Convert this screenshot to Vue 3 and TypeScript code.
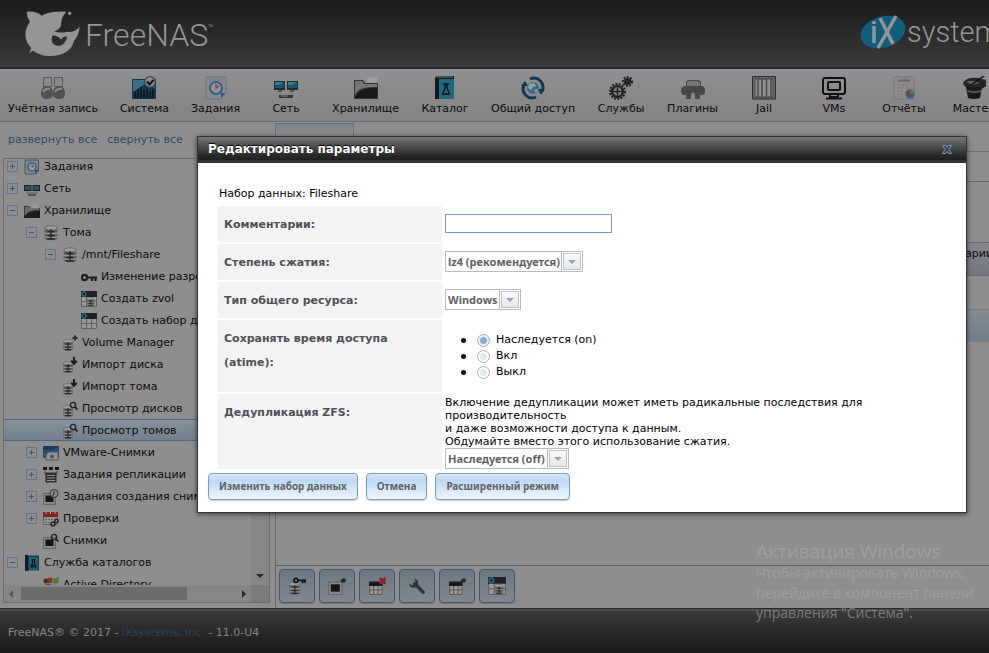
<script setup lang="ts">
import { ref } from 'vue'

interface TreeNode {
  label: string
  icon: string
  level: number
  state?: 'open' | 'closed'
  selected?: boolean
}

// Shared fragments drawn on a 16×16 canvas
const disks =
  '<path d="M2 3.500h12v10H2z" fill="#6e6e6e"/><path d="M1.500 5q6.500 2.500 13 0v2q-6.500 2.500-13 0zM1.500 9q6.500 2.500 13 0v2q-6.500 2.500-13 0zM1.500 12.500q6.500 2.500 13 0v1.500q-6.500 2.500-13 0z" fill="#5c5c5c"/><ellipse cx="8" cy="3" rx="6.300" ry="2.200" fill="#9c9c9c" stroke="#5a5a5a" stroke-width=".7"/><path d="M2 8.300h12M2 12.200h12" stroke="#a0a0a0"/><path d="M8 4v10M4.500 6.500h7M4.500 10.500h7M4 14h8" stroke="#262626" stroke-width="1.400"/>'
const smallDisks = `<g transform="translate(0 4) scale(.76)">${disks}</g>`
const grid =
  '<path d="M.5.5h15v15H.5z" fill="#999" stroke="#626262"/><path d="M0 0h16v6H0z" fill="#202020"/><path d="M5.500 6v10M10.500 6v10M0 10.500h16" stroke="#626262"/>'
const smallGrid =
  '<path d="M1 5h12v11H1z" fill="#999"/><path d="M1 4h12v4H1z" fill="#181818"/><path d="M1.500 8v7.500h11V8M5 8v8M9 8v8M1 11.500h12" stroke="#5c5c5c" fill="none"/>'
const ring = '<circle cx="3" cy="3" r="2" fill="none" stroke="#1c6d8a" stroke-width="1.500"/>'
const snapshot = '<path d="M.5 4.500h12v11H.500z" fill="#888" stroke="#666"/><path d="M2.500 6.500h8v6.500h-8z" fill="#151515"/>'
const lens = '<circle cx="11" cy="4" r="2.600" fill="none" stroke="#222" stroke-width="1.400"/><path d="M13 6l2.500 2.500" stroke="#222" stroke-width="1.800"/>'
const plus = '<path d="M13 .5v5M10.500 3h5" stroke="#303030" stroke-width="2"/>'
const downArrow = '<path d="M12 0v6M9.200 3.700l2.800 3 2.800-3" stroke="#1c1c1c" stroke-width="2" fill="none"/>'
const plug = '<path d="M11.500 4l2-1.500" stroke="#222" stroke-width="2"/><path d="M12 3h4M14 1v4" stroke="#2c2c2c" stroke-width="2"/>'

const treeIcons: Record<string, string> = {
  tasks:
    '<path d="M1 1h13.500v11l-3 3H1z" fill="#80868a" stroke="#4e5559"/><circle cx="8" cy="8" r="4" fill="#949da3" stroke="#3b6484" stroke-width="1.700"/><path d="M8 5.500V8l2-1" stroke="#803a30" fill="none"/><path d="M11 15l4-4h-4z" fill="#1a5880"/>',
  network:
    '<path d="M0 4h7.500v6H0zM8.500 4H16v6H8.500z" fill="#222"/><path d="M1 5h5.500v4H1zM9.500 5H15v4H9.500z" fill="#21576c"/><path d="M3 10v2h10v-2M8 12v2" stroke="#666" fill="none"/><path d="M4 13h8v2H4z" fill="#555"/>',
  folder:
    '<path d="M8 1l5-1 1 5H8z" fill="#999"/><path d="M0 3h5l2 2h9v10H0z" fill="#3b3b3b"/><path d="M1 13Q4 6 15 7V5H7L5 4H1z" fill="#6d6d6d"/><path d="M0 14Q4 7 16 8v7H0z" fill="#1c1c1c"/>',
  disks,
  key: '<circle cx="3.500" cy="8.500" r="2.600" fill="none" stroke="#1c1c1c" stroke-width="2.200"/><path d="M6 8.500h10M11 9v3M14.500 9v3" stroke="#1c1c1c" stroke-width="2.200"/>',
  zvol: `${grid}${ring}<g transform="translate(5 6) scale(.6)">${disks}</g>`,
  dataset: `${grid}${ring}`,
  diskAdd: smallDisks + plus,
  diskImport: smallDisks + downArrow,
  diskView: smallDisks + lens,
  vmware:
    '<path d="M0 1h16v12H0z" fill="#24506f"/><path d="M0 4q8 3 16-3H0z" fill="#1a3c58"/><path d="M3 9l3-2h9v8H3z" fill="#8e9498" stroke="#555"/><circle cx="9" cy="11.500" r="2" fill="#555"/>',
  replication:
    '<path d="M0 0h4v3H0zM6 0h4v3H6zM12 0h4v3h-4z" fill="#181818"/><path d="M2 4v3h2M14 4v3h-2" stroke="#444" fill="none"/><path d="M2.500 5.500h11v10h-11z" fill="#303030"/><path d="M4 8.500h8M4 11h8M4 13.500h8" stroke="#909090"/>',
  snapTask: `${snapshot}<circle cx="11" cy="4.500" r="4" fill="#8d8d8d" stroke="#333"/><path d="M11 2v3l-1.500 2" stroke="#222" fill="none"/>`,
  calendar:
    '<path d="M.5 1.500h14v12H.500z" fill="#929292" stroke="#666"/><path d="M0 1h15v5H0z" fill="#862222"/><path d="M3 0v3M7.500 0v3M12 0v3" stroke="#aaa"/><path d="M2 8.500h11M2 11.500h7" stroke="#666" stroke-dasharray="2 1"/><circle cx="10" cy="13" r="2" fill="none" stroke="#222" stroke-width="1.500"/><circle cx="13.500" cy="10" r="1.700" fill="none" stroke="#222" stroke-width="1.400"/>',
  snapView: snapshot + lens,
  directory:
    '<path d="M1 .5h14v15H1z" fill="#123e50"/><path d="M1 0h3v16H1z" fill="#101c22"/><path d="M5 2h9v13H5z" fill="#1b6076"/><path d="M8 4.500h3M8.500 4.500V8l-1.500 4h5l-1.500-4V4.500M8 10.500h4" stroke="#081216" stroke-width="1.200" fill="none"/>',
  windows:
    '<circle cx="3" cy="4" r="2.500" fill="#3b2a22"/><path d="M5 1q3-1 5 0l-1 5H4z" fill="#8c3424"/><path d="M11 1q2 1 5-1l-1 6q-3 1-5 0z" fill="#4a7a2b"/><path d="M3 7q3-1 5 0l-1 6q-3-1-5 0z" fill="#2c5583"/><path d="M9 7q3 1 5 0l-1 6q-3 1-5 0z" fill="#94802c"/>',
}

const tree: TreeNode[] = [
  { label: 'Задания', icon: 'tasks', level: 0, state: 'closed' },
  { label: 'Сеть', icon: 'network', level: 0, state: 'closed' },
  { label: 'Хранилище', icon: 'folder', level: 0, state: 'open' },
  { label: 'Тома', icon: 'disks', level: 1, state: 'open' },
  { label: '/mnt/Fileshare', icon: 'disks', level: 2, state: 'open' },
  { label: 'Изменение разрешений', icon: 'key', level: 3 },
  { label: 'Создать zvol', icon: 'zvol', level: 3 },
  { label: 'Создать набор данных', icon: 'dataset', level: 3 },
  { label: 'Volume Manager', icon: 'diskAdd', level: 2 },
  { label: 'Импорт диска', icon: 'diskImport', level: 2 },
  { label: 'Импорт тома', icon: 'diskImport', level: 2 },
  { label: 'Просмотр дисков', icon: 'diskView', level: 2 },
  { label: 'Просмотр томов', icon: 'diskView', level: 2, selected: true },
  { label: 'VMware-Снимки', icon: 'vmware', level: 1, state: 'closed' },
  { label: 'Задания репликации', icon: 'replication', level: 1, state: 'closed' },
  { label: 'Задания создания снимков', icon: 'snapTask', level: 1, state: 'closed' },
  { label: 'Проверки', icon: 'calendar', level: 1, state: 'closed' },
  { label: 'Снимки', icon: 'snapView', level: 1 },
  { label: 'Служба каталогов', icon: 'directory', level: 0, state: 'open' },
  { label: 'Active Directory', icon: 'windows', level: 1 },
]

const gear = (cx: number, cy: number, r: number): string =>
  `<circle cx="${cx}" cy="${cy}" r="${r}" fill="none" stroke="#222" stroke-width="2" stroke-dasharray="2 1.300"/><circle cx="${cx}" cy="${cy}" r="${r - 2}" fill="#777" stroke="#222" stroke-width="2.200"/><path d="M${cx - r + 2} ${cy}h${2 * r - 4}M${cx} ${cy - r + 2}v${2 * r - 4}" stroke="#222" stroke-width="1.200"/><circle cx="${cx}" cy="${cy}" r="1.500" fill="#222"/>`

// Main menu, icons drawn on a 24×24 canvas
const menu: { label: string; icon: string }[] = [
  {
    label: 'Учётная запись',
    icon: '<path d="M2 1h9v10H2zM13 1h9v10h-9z" fill="#5c5c5c"/><path d="M3 2h7v8H3zM14 2h7v8h-7z" fill="#8a8a8a"/><path d="M0 18q0-8 6-8t6 8q0 5-6 5t-6-5zM12 18q0-8 6-8t6 8q0 5-6 5t-6-5z" fill="#505050"/><path d="M2 16q2-4 7-3M14 16q2-4 7-3" stroke="#8c8c8c" stroke-width="2" fill="none"/>',
  },
  {
    label: 'Система',
    icon: '<path d="M0 3h24v20H0z" fill="#123a55"/><path d="M1 4h22v8L13 8 1 16z" fill="#3c6d89"/><path d="M3 22v-7M6 22v-9M9 22V11M12 22v-8M15 22v-9M18 22v-7M21 22v-9" stroke="#12181c" stroke-width="1.800"/><circle cx="18" cy="6" r="5.300" fill="#8f8f8f" stroke="#444" stroke-width="1.300"/><path d="M15 5.500l2.500 3L21.500 4" stroke="#111" stroke-width="2" fill="none"/>',
  },
  {
    label: 'Задания',
    icon: '<path d="M2 1h20v16l-5 6H2z" fill="#858b8e" stroke="#68777c"/><path d="M5 4h13M5 7h8M5 10h5M5 18h8" stroke="#73797c"/><circle cx="12" cy="12" r="6" fill="#8e9396" stroke="#345c84" stroke-width="2"/><path d="M12 8v4l3-2" stroke="#8b3a30" stroke-width="1.300" fill="none"/><path d="M17 22l4-5h-4z" fill="#1a5880"/>',
  },
  {
    label: 'Сеть',
    icon: '<path d="M0 5h11v9H0zM13 5h11v9H13z" fill="#2a2a2a"/><path d="M1 6h9v6H1zM14 6h9v6h-9z" fill="#125873"/><path d="M1 6h8L5 9H1zM14 6h8l-4 3h-4z" fill="#347c96"/><path d="M4 14h4v2H4zM16 14h4v2h-4z" fill="#555"/><path d="M5 19h14v3H5z" fill="#333"/><path d="M7 20h7" stroke="#888"/>',
  },
  {
    label: 'Хранилище',
    icon: '<path d="M13 2l10-1v8H13z" fill="#9d9d9d"/><path d="M0 4h9l2 3h13v16H0z" fill="#343434"/><path d="M1 20Q3 10 23 11V8H10L8 5H1z" fill="#777"/><path d="M1 22Q4 11 23 12v10z" fill="#181818"/>',
  },
  {
    label: 'Каталог',
    icon: '<path d="M2 2l2-2h17v23H2z" fill="#0e1c22"/><path d="M6 3h15v20H6z" fill="#1e6880"/><path d="M4 1h16" stroke="#888"/><path d="M10 8h6M12 8v4l-2.500 6h7L14 12V8M9 18h8" stroke="#0a1215" stroke-width="1.300" fill="none"/>',
  },
  {
    label: 'Общий доступ',
    icon: '<path d="M9 3a9 9 0 0 1 12 12M15 21A9 9 0 0 1 3 9" stroke="#123850" stroke-width="3" fill="none"/><path d="M17 13h7l-4 6zM0 10h7L4 5z" fill="#123850"/><circle cx="12" cy="12" r="6" fill="#3c6a86"/><path d="M8 8l5-1 2 3-3 1-2 3-3-2zM13 14l4-1-2 4z" fill="#8ca4b0"/>',
  },
  { label: 'Службы', icon: gear(8.5, 15.5, 7.5) + gear(18.5, 5.5, 4.5) },
  {
    label: 'Плагины',
    icon: '<path d="M5 7q0-3 4-3h7q4 0 4 3v3h2q2 1 2 5t-3 4h-2v4h-5v-5q-2-3-4 0v5H5v-4H3q-3 0-3-4t3-5h2z" fill="#484848"/><path d="M6 8q0-3 3-3h7q3 0 3 3v2H6z" fill="#767676"/>',
  },
  {
    label: 'Jail',
    icon: '<path d="M.5.5h23v22.500H.5z" fill="#696969" stroke="#2b2b2b"/><path d="M3 3h18v18H3z" fill="#8f8f8f" stroke="#444"/><path d="M6 3v18M10 3v18M14.500 3v18M19 3v18" stroke="#484848" stroke-width="1.500"/>',
  },
  {
    label: 'VMs',
    icon: '<rect x="1" y="2" width="22" height="16" rx="2" fill="none" stroke="#111" stroke-width="2"/><rect x="6" y="6" width="12" height="8" rx="1" fill="none" stroke="#111" stroke-width="2"/><path d="M8 19v2h8v-2M4 22.500h16" stroke="#111" stroke-width="2" fill="none"/>',
  },
  {
    label: 'Отчёты',
    icon: '<path d="M2 1h20v22H2z" fill="#8c8c8c" stroke="#777"/><path d="M6 4.500h12" stroke="#666" stroke-width="2"/><path d="M5 9h14M5 12h14M5 15h6M5 18h6" stroke="#797979" stroke-dasharray="3 1"/><circle cx="18" cy="18" r="4.500" fill="#365d91"/><path d="M18 18v-4.500a4.500 4.500 0 0 0-4.500 4.500z" fill="#8b4020"/><path d="M18 18h4.500a4.500 4.500 0 0 0-4.500-4.500z" fill="#557e38"/>',
  },
  {
    label: 'Мастер',
    icon: '<path d="M1 7Q4 1 16 2l8 2v6q-4 4-14 3Q2 12 1 7z" fill="#242424"/><path d="M4 11h16l-2 11q-6 2-12 0z" fill="#191919"/><path d="M5 14q7 2 14 0v2q-7 2-13 0z" fill="#555"/><path d="M4 6q8-3 14 1L10 9z" fill="#606060"/><path d="M9 9L22 0" stroke="#111" stroke-width="1.500"/>',
  },
]

const tools: { name: string; icon: string }[] = [
  { name: 'Права', icon: `${smallDisks}<circle cx="7" cy="3" r="1.800" fill="none" stroke="#111" stroke-width="1.400"/><path d="M9 3h7M13 3v2.500M15 3v2" stroke="#111" stroke-width="1.600"/>` },
  { name: 'Создать снимок', icon: snapshot + plug },
  { name: 'Удалить', icon: `${smallGrid}<path d="M10.500 1l5 5M15.500 1l-5 5" stroke="#8f2025" stroke-width="2.800"/>` },
  {
    name: 'Изменить',
    icon: '<path d="M6 6l7.500 7.500" stroke="#303436" stroke-width="3" stroke-linecap="round"/><path d="M5.500 1.500A4 4 0 1 1 1 6l3 1.300L7 4.500z" fill="#303436"/>',
  },
  { name: 'Создать набор', icon: smallGrid + plug },
  { name: 'Создать zvol', icon: treeIcons.zvol },
]

const comment = ref('')
const compression = ref('lz4 (рекомендуется)')
const shareType = ref('Windows')
const atime = ref('inherit')
const dedup = ref('Наследуется (off)')
const atimeOptions = [
  { value: 'inherit', label: 'Наследуется (on)' },
  { value: 'on', label: 'Вкл' },
  { value: 'off', label: 'Выкл' },
]
</script>

<template>
  <div class="page">
    <header class="brand">
      <svg class="fish" viewBox="75 33 168 141" aria-hidden="true">
        <path
          fill-rule="evenodd"
          d="M80 38Q110 36 125 50Q150 36 199 38Q182 56 183 80Q178 92 162 97Q180 104 202 98Q222 102 239 84Q236 112 222 125Q212 170 148 171Q118 170 100 155L86 162Q92 155 94 148Q60 110 90 68Q80 52 80 38ZM157 110Q148 140 178 141Q196 136 202 114Q190 108 184 122Q172 108 157 110Z"
        />
        <circle cx="209" cy="43" r="5" />
      </svg>
      <span class="brand-name">FreeNAS<sup>™</sup></span>
      <div class="vendor">
        <svg viewBox="0 0 46 36" aria-hidden="true">
          <ellipse cx="23" cy="18" rx="23" ry="15.500" transform="rotate(-18 23 18)" fill="#105e7e" />
          <path d="M14 12v17M14 7v3" stroke="#959595" stroke-width="3.500" />
          <path d="M20 4L33 30M36 2L18 34" stroke="#959595" stroke-width="3.500" />
        </svg>
        <span>systems</span>
      </div>
    </header>

    <nav class="menu">
      <a v-for="item in menu" :key="item.label" href="#" class="menu-item">
        <svg viewBox="0 0 24 24" aria-hidden="true" v-html="item.icon"></svg>
        <span>{{ item.label }}</span>
      </a>
    </nav>

    <main class="workspace">
      <aside class="sidebar">
        <div class="tree-actions">
          <a href="#">развернуть все</a>
          <a href="#">свернуть все</a>
        </div>
        <div class="tree-box">
          <div class="tree-view">
            <ul class="tree">
              <li
                v-for="node in tree"
                :key="node.label"
                class="node"
                :class="[`level-${node.level}`, { selected: node.selected }]"
              >
                <span class="toggle" :class="node.state"></span>
                <svg viewBox="0 0 16 16" aria-hidden="true" v-html="treeIcons[node.icon]"></svg>
                <span>{{ node.label }}</span>
              </li>
            </ul>
          </div>
          <div class="vscroll"><i class="arrow down"></i></div>
          <div class="hscroll">
            <i class="arrow left"></i>
            <span class="track"><span class="thumb"></span></span>
            <i class="arrow right"></i>
          </div>
          <div class="corner"></div>
        </div>
      </aside>

      <section class="content">
        <div class="tabs"><div class="tab"></div></div>
        <div class="panel">
          <div class="subtabs"></div>
          <div class="spacer"></div>
          <div class="grid-head">Комментарии</div>
          <div class="grid-row"></div>
          <div class="grid-row active"></div>
        </div>
        <div class="toolbar">
          <button v-for="tool in tools" :key="tool.name" type="button" class="tool" :aria-label="tool.name">
            <svg viewBox="0 0 16 16" aria-hidden="true" v-html="tool.icon"></svg>
          </button>
        </div>
      </section>
    </main>

    <footer class="footer">FreeNAS® © 2017 - <a href="#">iXsystems, Inc.</a> - 11.0-U4</footer>

    <div class="dialog" role="dialog" aria-labelledby="dialog-title">
      <div class="dialog-title">
        <h1 id="dialog-title">Редактировать параметры</h1>
        <button type="button" class="close" aria-label="Закрыть">
          <svg viewBox="0 0 10 9" aria-hidden="true">
            <path d="M.5.5h3L5 2.500 6.500.5h3L7 4.500l2.500 4h-3L5 6.500l-1.500 2h-3L3 4.500z" fill="#344a5c" stroke="#8094a4" />
          </svg>
        </button>
      </div>
      <form class="dialog-body" @submit.prevent>
        <p class="dataset">Набор данных: Fileshare</p>
        <table class="fields">
          <tbody>
            <tr>
              <th scope="row"><label for="comment">Комментарии:</label></th>
              <td><input id="comment" v-model="comment" class="text" type="text" /></td>
            </tr>
            <tr>
              <th scope="row"><label for="compression">Степень сжатия:</label></th>
              <td>
                <span class="select">
                  <select id="compression" v-model="compression"><option>lz4 (рекомендуется)</option></select>
                  <i class="drop"></i>
                </span>
              </td>
            </tr>
            <tr>
              <th scope="row"><label for="share">Тип общего ресурса:</label></th>
              <td>
                <span class="select">
                  <select id="share" v-model="shareType"><option>Windows</option></select>
                  <i class="drop"></i>
                </span>
              </td>
            </tr>
            <tr>
              <th scope="row">Сохранять время доступа (atime):</th>
              <td>
                <ul class="radios">
                  <li v-for="option in atimeOptions" :key="option.value">
                    <label>
                      <input v-model="atime" type="radio" name="atime" :value="option.value" />
                      <span>{{ option.label }}</span>
                    </label>
                  </li>
                </ul>
              </td>
            </tr>
            <tr>
              <th scope="row"><label for="dedup">Дедупликация ZFS:</label></th>
              <td class="stacked">
                <p class="warning">
                  Включение дедупликации может иметь радикальные последствия для производительность<br />
                  и даже возможности доступа к данным.<br />
                  Обдумайте вместо этого использование сжатия.
                </p>
                <span class="select">
                  <select id="dedup" v-model="dedup"><option>Наследуется (off)</option></select>
                  <i class="drop"></i>
                </span>
              </td>
            </tr>
          </tbody>
        </table>
        <div class="actions">
          <button type="submit">Изменить набор данных</button>
          <button type="button">Отмена</button>
          <button type="button">Расширенный режим</button>
        </div>
      </form>
    </div>

    <div class="watermark">
      <strong>Активация Windows</strong>
      Чтобы активировать Windows, перейдите в компонент панели управления "Система".
    </div>
  </div>
</template>

<style>
body {
  background: #8e8e8e;
}
</style>

<style scoped>
* {
  box-sizing: border-box;
}
.page {
  position: relative;
  display: flex;
  flex-direction: column;
  height: 100vh;
  overflow: hidden;
  font-family: Verdana, 'DejaVu Sans', sans-serif;
  font-size: 11px;
  color: #0c0c0c;
  background: #8e8e8e;
}
a {
  color: inherit;
  text-decoration: none;
}
ul,
p,
h1 {
  margin: 0;
  padding: 0;
}
ul {
  list-style: none;
}

.brand {
  display: flex;
  flex: none;
  align-items: center;
  height: 69px;
  padding-left: 25px;
  background: linear-gradient(#1b1b1b, #3a3a3a);
  border-bottom: 2px solid #252528;
  color: #959595;
  font-family: Roboto, 'Open Sans', sans-serif;
  font-weight: 300;
}
.fish {
  width: 56px;
  height: 47px;
  fill: #959595;
}
.brand-name {
  flex: 1;
  padding: 2px 0 0 4px;
  font-size: 32px;
  line-height: 40px;
}
.brand-name sup {
  font-size: 9px;
  line-height: 0;
  vertical-align: 15px;
}
.vendor {
  display: flex;
  flex: none;
  align-items: center;
  gap: 1px;
  width: 129px;
  padding-bottom: 4px;
  font-size: 29px;
}
.vendor svg {
  flex: none;
  width: 46px;
  height: 36px;
}

.menu {
  display: flex;
  flex: none;
  gap: 22px;
  height: 53px;
  padding: 6px 8px 0;
  overflow: hidden;
  background: linear-gradient(#909090, #838383);
  border-top: 1px solid #8f90a0;
  border-bottom: 1px solid #6b6d7a;
}
.menu-item {
  display: flex;
  flex: none;
  flex-direction: column;
  align-items: center;
  min-width: 48px;
}
.menu-item svg {
  width: 24px;
  height: 24px;
}
.menu-item span {
  line-height: 18px;
}

.workspace {
  display: flex;
  flex: 1;
  min-height: 0;
}
.sidebar {
  display: flex;
  flex: none;
  flex-direction: column;
  width: 275px;
  padding: 0 5px 6px 3px;
}
.tree-actions {
  display: flex;
  gap: 10px;
  padding: 11px 5px 12px;
  line-height: 13px;
  color: #2f4a64;
}
.tree-box {
  display: grid;
  flex: 1;
  grid-template-rows: minmax(0, 1fr) 17px;
  grid-template-columns: minmax(0, 1fr) 18px;
  min-height: 0;
  border: 1px solid #6e6e6e;
}
.tree-view {
  display: flex;
  flex-direction: column;
  overflow: hidden;
}
.tree {
  margin-top: -4px;
}
.node {
  display: flex;
  align-items: center;
  height: 22px;
  white-space: nowrap;
  border: solid transparent;
  border-width: 1px 0;
}
.node.selected {
  border-color: #4c6880;
  background: linear-gradient(#87929c, #70808e);
}
.level-0 {
  padding-left: 3px;
}
.level-1 {
  padding-left: 22px;
}
.level-2 {
  padding-left: 41px;
}
.level-3 {
  padding-left: 60px;
}
.node svg {
  flex: none;
  width: 16px;
  height: 16px;
  margin: 2px 4px 0 6px;
}
.toggle {
  flex: none;
  width: 11px;
  height: 11px;
}
.toggle.open,
.toggle.closed {
  border: 1px solid #6c7484;
  background:
    linear-gradient(#3e5270, #3e5270) center / 5px 1px no-repeat,
    #8b8e92;
}
.toggle.closed {
  background:
    linear-gradient(#3e5270, #3e5270) center / 5px 1px no-repeat,
    linear-gradient(#3e5270, #3e5270) center / 1px 5px no-repeat,
    #8b8e92;
}
.vscroll,
.hscroll {
  display: flex;
  align-items: center;
  background: #868686;
}
.vscroll {
  flex-direction: column;
  justify-content: flex-end;
  padding-bottom: 7px;
}
.hscroll {
  padding: 0 5px;
}
.corner {
  background: #7b7b7b;
}
.track {
  flex: 1;
  height: 13px;
  margin: 0 8px;
}
.thumb {
  display: block;
  width: 78%;
  height: 100%;
  background: #6c6c6c;
}
.arrow {
  width: 0;
  height: 0;
  border: 4px solid transparent;
}
.arrow.down {
  border-top-color: #292929;
  border-bottom: 0;
}
.arrow.left {
  border-right-color: #555;
  border-left: 0;
}
.arrow.right {
  border-left-color: #292929;
  border-right: 0;
}

.content {
  display: flex;
  flex: 1;
  flex-direction: column;
  min-width: 0;
}
.tabs {
  display: flex;
  align-items: flex-end;
  height: 30px;
  border-bottom: 1px solid #6b6d7a;
}
.tab {
  width: 79px;
  height: 28px;
  border: 1px solid #6b717c;
  border-bottom: 0;
  background: linear-gradient(#76848f, #8e8e8e 8px);
}
.panel {
  flex: 1;
  margin-right: -4px;
  border-left: 1px solid #66686c;
  border-bottom: 1px solid #606060;
}
.subtabs {
  height: 30px;
  border-bottom: 1px solid #67676e;
}
.spacer {
  height: 60px;
}
.grid-head {
  height: 34px;
  border: solid #696969;
  border-width: 1px 0;
  line-height: 22px;
  text-align: right;
  background: linear-gradient(#84868c, #74767f);
}
.grid-row {
  height: 33px;
}
.grid-row.active {
  border: solid #85786a;
  border-width: 1px 0;
  background: linear-gradient(#858c92, #707f8c);
}
.toolbar {
  display: flex;
  gap: 4px;
  padding: 3px 3px 6px;
  border-left: 1px solid #66686c;
}
.tool {
  display: grid;
  place-items: center;
  width: 36px;
  height: 34px;
  padding: 0;
  border: 1px solid #42596e;
  border-radius: 4px;
  background: linear-gradient(#6a7885, #82878d);
  box-shadow: 0 1px 1px #747474;
}
.tool svg {
  width: 18px;
  height: 18px;
}

.footer {
  flex: none;
  height: 44px;
  padding-left: 8px;
  border-top: 2px solid #4c4c4c;
  outline: 1px solid #29292c;
  line-height: 44px;
  color: #858585;
  background: linear-gradient(#3a3a3a, #18181a);
}
.footer a {
  color: #2a4259;
}

/* Modal window over the workspace */
.dialog {
  position: absolute;
  top: 136px;
  right: 22px;
  left: 197px;
  border: 1px solid #333;
  background: #fff;
  box-shadow: 0 1px 5px rgba(0, 0, 0, 0.6);
  color: #000;
}
.dialog-title {
  display: flex;
  align-items: center;
  justify-content: space-between;
  height: 26px;
  padding: 0 14px 2px 10px;
  background: linear-gradient(#777, #2a2a2a 70%, #1f1f1f 88%, #343434 90%);
}
.dialog-title h1 {
  color: #fff;
  font-size: 12px;
  text-shadow: 0 -1px 1px #000;
}
.close {
  padding: 0;
  border: 0;
  background: none;
  line-height: 0;
}
.close svg {
  width: 10px;
  height: 9px;
}
.dialog-body {
  padding: 24px 10px 12px;
}
.dataset {
  padding-left: 11px;
  line-height: 14px;
}
.fields {
  margin: 3px 0 2px 8px;
  border-spacing: 2px;
}
.fields th {
  width: 224px;
  padding: 7px 6px 5px;
  color: #4f5157;
  font-weight: bold;
  line-height: 24px;
  text-align: left;
  vertical-align: top;
  background: #f3f3f3;
}
.fields td {
  padding: 0 1px 2px;
}
.text {
  display: block;
  width: 167px;
  height: 19px;
  padding: 0 3px;
  border: 1px solid #759dc0;
  font: inherit;
}
.select {
  position: relative;
  display: block;
  width: fit-content;
}
.select select {
  display: block;
  height: 21px;
  padding: 0 22px 0 2px;
  border: 1px solid #b5bcc7;
  border-radius: 0;
  appearance: none;
  background: #fff;
  color: #626262;
  font: bold 11px 'Noto Sans', sans-serif;
}
.drop {
  position: absolute;
  top: 1px;
  right: 1px;
  width: 20px;
  height: 19px;
  border: 1px solid #fff;
  box-shadow: inset 0 0 0 1px #c4c4c4, -1px 0 0 #b5bcc7;
  background: linear-gradient(#fafafa, #e6e6e6);
  pointer-events: none;
}
.drop::after {
  position: absolute;
  top: 7px;
  left: 5px;
  border: 4px solid transparent;
  border-top-color: #92a6cf;
  border-bottom: 0;
  content: '';
}
.radios {
  padding: 12px 0 10px 16px;
}
.radios li {
  display: flex;
  align-items: center;
  gap: 11px;
  height: 16px;
  line-height: 16px;
}
.radios li::before {
  width: 5px;
  height: 5px;
  border-radius: 50%;
  background: #111;
  content: '';
}
.radios label {
  display: flex;
  align-items: center;
  gap: 6px;
}
.radios input {
  width: 13px;
  height: 13px;
  margin: 1px 0 0;
  border: 1px solid #aab0ba;
  border-radius: 50%;
  appearance: none;
  background: radial-gradient(circle, #dfe9f3 0 3px, #fff 4px);
}
.radios input:checked {
  background: radial-gradient(circle, #7fb0d4 0 3px, #e8f1f8 4px);
}
.warning {
  width: 430px;
  line-height: 13px;
}
.fields .stacked {
  padding: 2px 1px 0;
}
.actions {
  display: flex;
  gap: 8px;
}
.actions button {
  height: 27px;
  padding: 0 10px 2px;
  border: 1px solid #759dc0;
  border-radius: 4px;
  background: linear-gradient(#d7e8f9, #bcd8f4 25%, #f0f6fd);
  box-shadow: 0 1px 1px rgba(0, 0, 0, 0.2);
  color: #626262;
  font: bold 10px 'Noto Sans', sans-serif;
}

/* System notice floating over the lower-right corner */
.watermark {
  position: absolute;
  right: 8px;
  bottom: 30px;
  width: 225px;
  color: rgba(168, 168, 168, 0.62);
  font: 14px/20px 'Open Sans', 'Noto Sans', sans-serif;
  pointer-events: none;
}
.watermark strong {
  display: block;
  font-size: 19px;
  font-weight: 400;
  line-height: 24px;
}
</style>
